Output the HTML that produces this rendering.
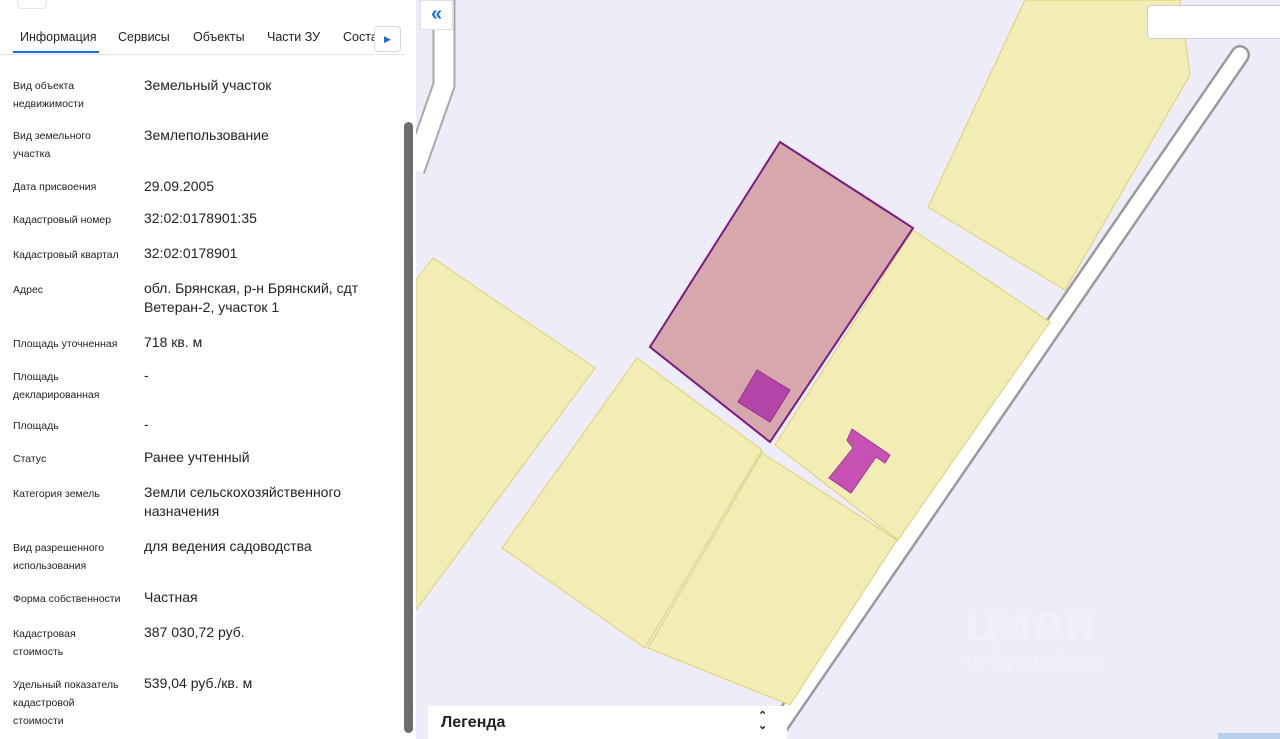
<!DOCTYPE html><html><head><meta charset="utf-8"><style>
*{margin:0;padding:0;box-sizing:border-box}
body{width:1280px;height:739px;overflow:hidden;font-family:"Liberation Sans",sans-serif;background:#eeecf8;position:relative}
#p{position:absolute;left:0;top:0;width:416px;height:739px;background:#fff}
.tb{position:absolute;top:0;left:17px;width:30px;height:9px;border:1px solid #e4e4e4;border-top:none;border-radius:0 0 5px 5px}
.tabs{position:absolute;top:30px;left:0;width:404px;height:25px;border-bottom:1px solid #e2e5ea;font-size:12.5px;color:#222}
.tabs span{position:absolute;top:0}
.ul{position:absolute;left:13px;top:21px;width:86px;height:2px;background:#1a6fe0}
.arr{position:absolute;left:374px;top:26px;width:27px;height:26px;background:#fff;border:1px solid #d5d9e0;border-radius:4px;font-size:9px;color:#1a6fe0;text-align:center;line-height:24px}
.l{position:absolute;left:13px;font-size:10.5px;color:#222;line-height:18px;margin-top:1px}
.v{position:absolute;left:144px;font-size:14px;color:#222;line-height:19px;margin-top:1px}
.sb{position:absolute;left:404px;top:122px;width:9px;height:611px;background:#6d6d6d;border-radius:5px}
</style></head><body>
<svg style="position:absolute;left:0;top:0" width="1280" height="739">
<path d="M1240 55 L770 739" stroke="#9a9a9a" stroke-width="20" stroke-linecap="round" fill="none"/>
<path d="M1240 55 L770 739" stroke="#fff" stroke-width="15" stroke-linecap="round" fill="none"/>
<path d="M444 0 L444 85 L414 170" stroke="#a8a8a8" stroke-width="23" fill="none"/>
<path d="M444 0 L444 85 L414 170" stroke="#fff" stroke-width="19" fill="none"/>
<g fill="#f2edb5" stroke="#ddd070" stroke-width="1">
<polygon points="1025,0 1180,0 1190,75 1065,290 928,207"/>
<polygon points="433,258 595,368 416,610 416,280"/>
<polygon points="913,230 1050,322 898,540 775,445"/>
<polygon points="637,358 762,450 645,648 502,548"/>
<polygon points="762,453 897,540 790,705 648,648"/>
</g>
<polygon points="780,142 913,228 770,442 650,347" fill="#d6a8ab" stroke="#7a1a86" stroke-width="2"/>
<polygon points="757,370 790,390 770,422 738,402" fill="#b445a8" stroke="#9a3090"/>
<polygon points="852,429 890,455 885,463 876,457 851,493 829,478 853,448 847,440" fill="#c650b4" stroke="#a33a98"/>
<text x="965" y="640" font-family="Liberation Sans" font-size="55" font-weight="bold" fill="#f1f0f9">циан</text>
<text x="965" y="670" font-family="Liberation Sans" font-size="22" font-weight="bold" fill="#f1f0f9">ID 322185694</text>
</svg>
<div style="position:absolute;left:420px;top:0;width:33px;height:30px;background:#fff;border:1px solid #dde;color:#1a6fe0;font-size:20px;font-weight:bold;text-align:center;line-height:26px">«</div>
<div style="position:absolute;left:1147px;top:5px;width:140px;height:34px;background:#fff;border:1px solid #ccd;border-radius:4px"></div>
<div style="position:absolute;left:428px;top:706px;width:359px;height:33px;background:#fff;font-size:16px;font-weight:bold;color:#222;padding:8px 13px">Легенда<span style="position:absolute;left:330px;top:5px;font-size:11px;line-height:10px">⌃<br>⌄</span></div>
<div style="position:absolute;left:1218px;top:733px;width:62px;height:6px;background:#b8d0ee"></div>
<div id="p">
<div class="tb"></div>
<div class="tabs"><span style="left:20px">Информация</span><span style="left:118px">Сервисы</span><span style="left:193px">Объекты</span><span style="left:267px">Части ЗУ</span><span style="left:343px">Соста</span><div class="ul"></div></div>
<div class="arr">▶</div>
<div class="l" style="top:76px">Вид объекта<br>недвижимости</div><div class="v" style="top:75px">Земельный участок</div>
<div class="l" style="top:126px">Вид земельного<br>участка</div><div class="v" style="top:125px">Землепользование</div>
<div class="l" style="top:177px">Дата присвоения</div><div class="v" style="top:176px">29.09.2005</div>
<div class="l" style="top:210px">Кадастровый номер</div><div class="v" style="top:208px">32:02:0178901:35</div>
<div class="l" style="top:245px">Кадастровый квартал</div><div class="v" style="top:243px">32:02:0178901</div>
<div class="l" style="top:280px">Адрес</div><div class="v" style="top:278px">обл. Брянская, р-н Брянский, сдт<br>Ветеран-2, участок 1</div>
<div class="l" style="top:334px">Площадь уточненная</div><div class="v" style="top:332px">718 кв. м</div>
<div class="l" style="top:367px">Площадь<br>декларированная</div><div class="v" style="top:365px">-</div>
<div class="l" style="top:416px">Площадь</div><div class="v" style="top:414px">-</div>
<div class="l" style="top:449px">Статус</div><div class="v" style="top:447px">Ранее учтенный</div>
<div class="l" style="top:484px">Категория земель</div><div class="v" style="top:482px">Земли сельскохозяйственного<br>назначения</div>
<div class="l" style="top:538px">Вид разрешенного<br>использования</div><div class="v" style="top:536px">для ведения садоводства</div>
<div class="l" style="top:589px">Форма собственности</div><div class="v" style="top:587px">Частная</div>
<div class="l" style="top:624px">Кадастровая<br>стоимость</div><div class="v" style="top:622px">387 030,72 руб.</div>
<div class="l" style="top:675px">Удельный показатель<br>кадастровой<br>стоимости</div><div class="v" style="top:673px">539,04 руб./кв. м</div>
<div class="sb"></div>
</div>
</body></html>
